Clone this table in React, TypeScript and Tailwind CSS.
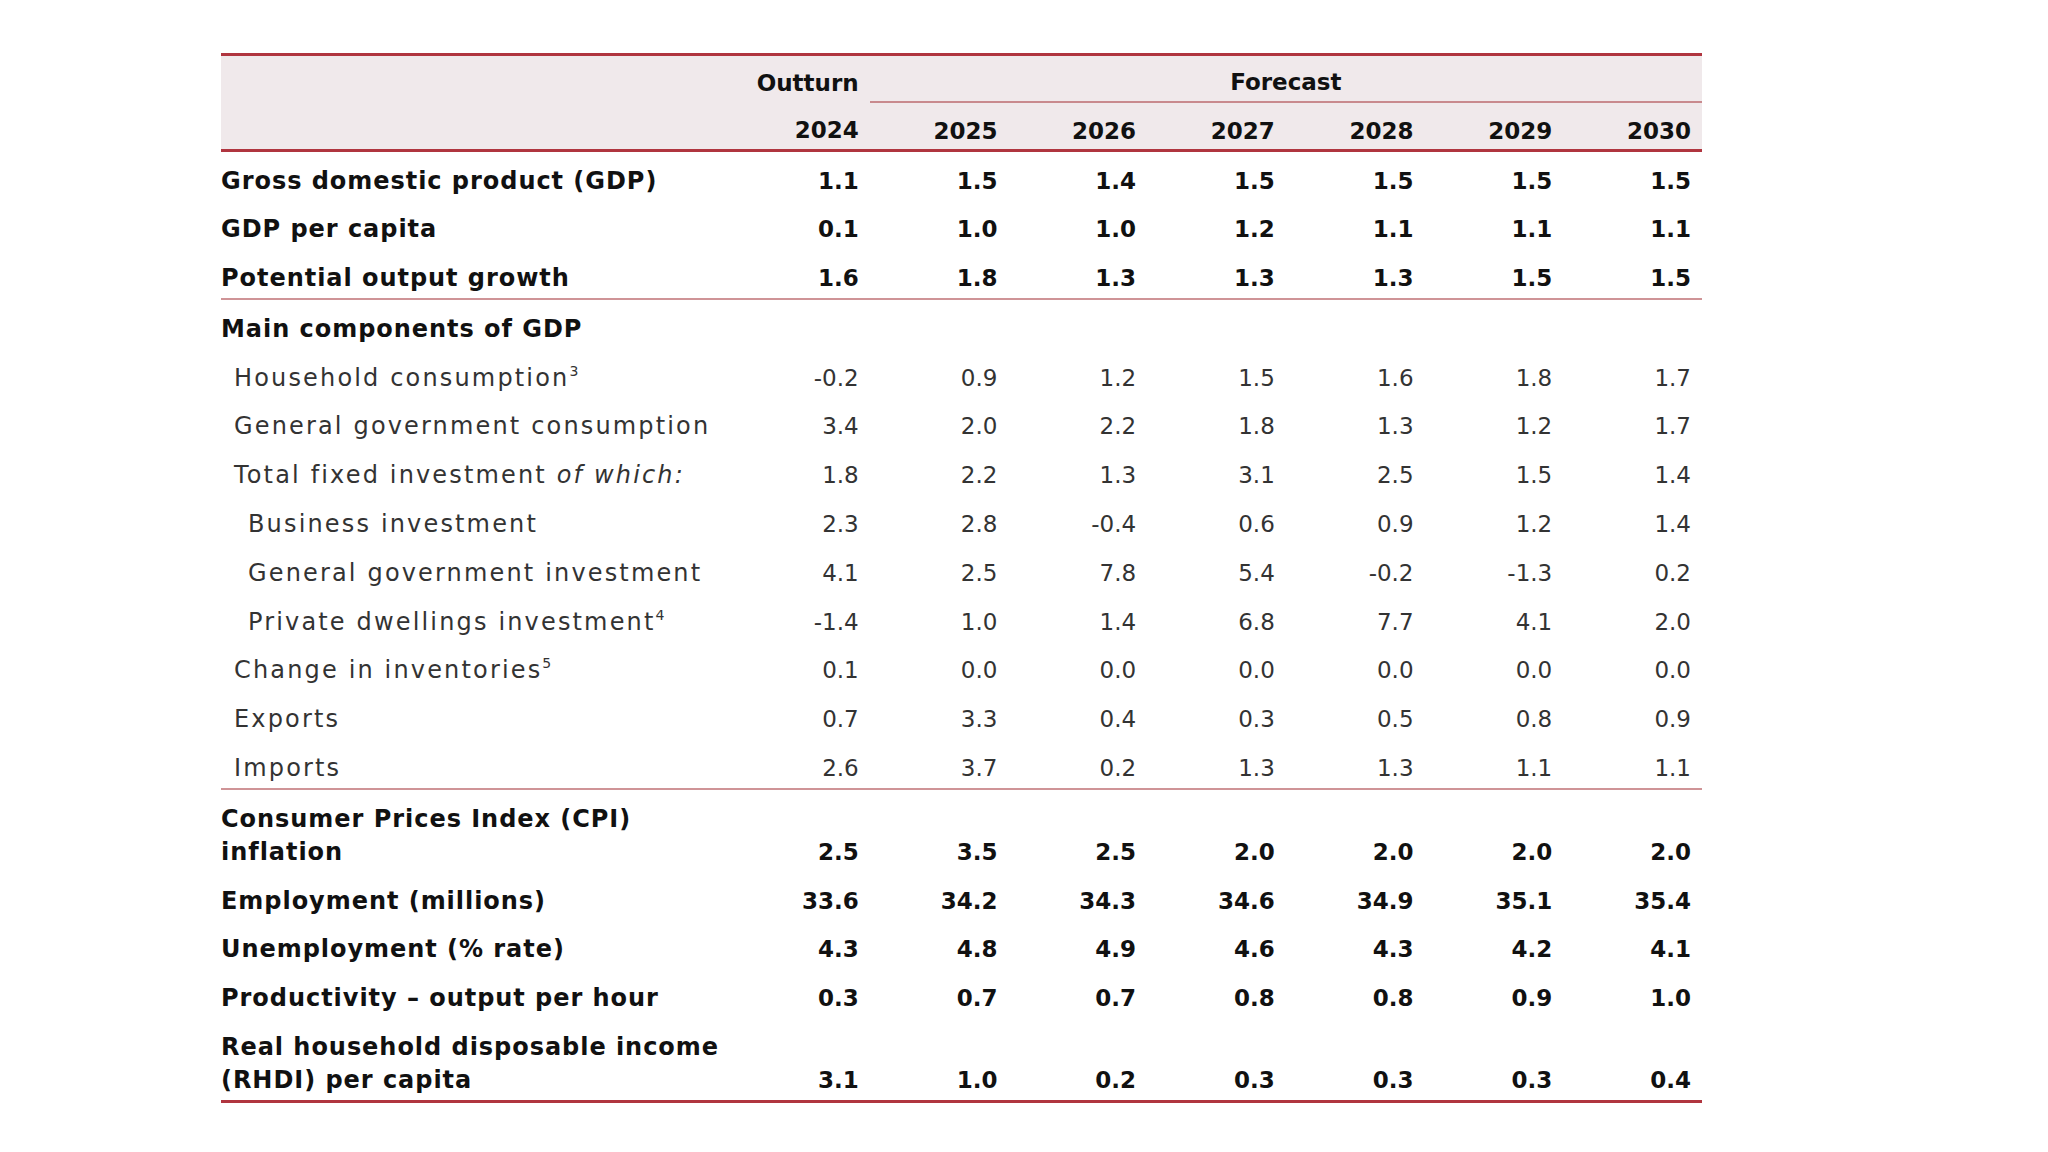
type Row = {
  label: React.ReactNode;
  values?: string[];
  bold?: boolean;
  indent?: 0 | 1 | 2;
  twoLine?: boolean;
  border?: "thin" | "thick";
};

const years = ["2024", "2025", "2026", "2027", "2028", "2029", "2030"];

const sup = "text-[14px] -top-[10px] tracking-normal";

const rows: Row[] = [
  { label: "Gross domestic product (GDP)", bold: true, values: ["1.1", "1.5", "1.4", "1.5", "1.5", "1.5", "1.5"] },
  { label: "GDP per capita", bold: true, values: ["0.1", "1.0", "1.0", "1.2", "1.1", "1.1", "1.1"] },
  { label: "Potential output growth", bold: true, values: ["1.6", "1.8", "1.3", "1.3", "1.3", "1.5", "1.5"], border: "thin" },
  { label: "Main components of GDP", bold: true },
  { label: <>Household consumption<sup className={sup}>3</sup></>, indent: 1, values: ["-0.2", "0.9", "1.2", "1.5", "1.6", "1.8", "1.7"] },
  { label: "General government consumption", indent: 1, values: ["3.4", "2.0", "2.2", "1.8", "1.3", "1.2", "1.7"] },
  { label: <>Total fixed investment <i>of which:</i></>, indent: 1, values: ["1.8", "2.2", "1.3", "3.1", "2.5", "1.5", "1.4"] },
  { label: "Business investment", indent: 2, values: ["2.3", "2.8", "-0.4", "0.6", "0.9", "1.2", "1.4"] },
  { label: "General government investment", indent: 2, values: ["4.1", "2.5", "7.8", "5.4", "-0.2", "-1.3", "0.2"] },
  { label: <>Private dwellings investment<sup className={sup}>4</sup></>, indent: 2, values: ["-1.4", "1.0", "1.4", "6.8", "7.7", "4.1", "2.0"] },
  { label: <>Change in inventories<sup className={sup}>5</sup></>, indent: 1, values: ["0.1", "0.0", "0.0", "0.0", "0.0", "0.0", "0.0"] },
  { label: "Exports", indent: 1, values: ["0.7", "3.3", "0.4", "0.3", "0.5", "0.8", "0.9"] },
  { label: "Imports", indent: 1, values: ["2.6", "3.7", "0.2", "1.3", "1.3", "1.1", "1.1"], border: "thin" },
  { label: <>Consumer Prices Index (CPI)<br />inflation</>, bold: true, twoLine: true, values: ["2.5", "3.5", "2.5", "2.0", "2.0", "2.0", "2.0"] },
  { label: "Employment (millions)", bold: true, values: ["33.6", "34.2", "34.3", "34.6", "34.9", "35.1", "35.4"] },
  { label: "Unemployment (% rate)", bold: true, values: ["4.3", "4.8", "4.9", "4.6", "4.3", "4.2", "4.1"] },
  { label: "Productivity – output per hour", bold: true, values: ["0.3", "0.7", "0.7", "0.8", "0.8", "0.9", "1.0"] },
  { label: <>Real household disposable income<br />(RHDI) per capita</>, bold: true, twoLine: true, values: ["3.1", "1.0", "0.2", "0.3", "0.3", "0.3", "0.4"], border: "thick" },
];

const indentClass = ["pl-0", "pl-[13px]", "pl-[27px]"];

export default function App() {
  return (
    <div className="w-[2048px] h-[1152px] bg-white pt-[53px] pl-[221px] font-['DejaVu_Sans','Liberation_Sans',sans-serif] text-[23px] leading-[33px] text-[#111]">
      <table className="w-[1481px] table-fixed border-collapse">
        <colgroup>
          <col className="w-[510px]" />
          {years.map(y => <col key={y} />)}
        </colgroup>
        <thead className="bg-[#f0e9eb]">
          {/* Outturn / Forecast */}
          <tr className="border-t-[3px] border-[#b0353f]">
            <th className="h-[47px]" />
            <th className="pr-[11px] pt-[9px] text-right font-bold align-middle">Outturn</th>
            <th colSpan={6} className="pt-[9px] text-center font-bold align-middle border-b-2 border-[#c98a8e]">Forecast</th>
          </tr>
          {/* Years */}
          <tr className="border-b-[3px] border-[#b0353f]">
            <th className="h-[49px]" />
            {years.map(y => (
              <th key={y} className="pr-[11px] pt-[11px] text-right font-bold align-middle">{y}</th>
            ))}
          </tr>
        </thead>
        <tbody>
          {rows.map((r, i) => {
            const border =
              r.border === "thin" ? "border-b-2 border-[#cf9497]" :
              r.border === "thick" ? "border-b-[3px] border-[#b0353f]" : "";
            const text = r.bold ? "font-bold text-[#111]" : "font-normal text-[#333]";
            const label = r.bold ? "text-[24px] tracking-[0.04em]" : "text-[24px] tracking-[0.09em]";
            return (
              <tr key={i} className={border}>
                <td className={`pt-[12.5px] pb-[3.3px] align-top whitespace-nowrap ${indentClass[r.indent ?? 0]} ${text} ${label}`}>{r.label}</td>
                {(r.values ?? years.map(() => "")).map((v, j) => (
                  <td key={j} className={`pt-[12.5px] pb-[3.3px] pr-[11px] text-right ${r.twoLine ? "align-bottom" : "align-top"} ${text}`}>
                    {v}
                  </td>
                ))}
              </tr>
            );
          })}
        </tbody>
      </table>
    </div>
  );
}
